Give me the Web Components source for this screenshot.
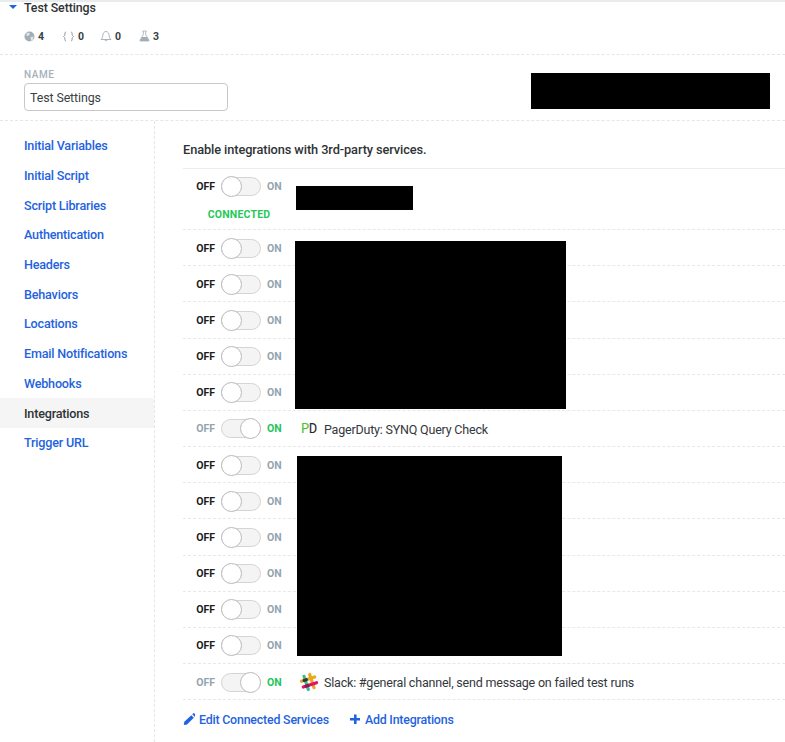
<!DOCTYPE html>
<html>
<head>
<meta charset="utf-8">
<style>
  html, body { margin: 0; padding: 0; background: #fff; }
  body { font-family: Roboto, "Open Sans", sans-serif; color: #33383c; width: 785px; height: 742px; overflow: hidden; }
</style>
</head>
<body>
<settings-header title="Test Settings"></settings-header>
<name-section value="Test Settings"></name-section>
<settings-body>
  <side-nav slot="nav">
    <nav-item>Initial Variables</nav-item>
    <nav-item>Initial Script</nav-item>
    <nav-item>Script Libraries</nav-item>
    <nav-item>Authentication</nav-item>
    <nav-item>Headers</nav-item>
    <nav-item>Behaviors</nav-item>
    <nav-item>Locations</nav-item>
    <nav-item>Email Notifications</nav-item>
    <nav-item>Webhooks</nav-item>
    <nav-item active>Integrations</nav-item>
    <nav-item>Trigger URL</nav-item>
  </side-nav>
  <integration-list heading="Enable integrations with 3rd-party services.">
    <integration-row status="CONNECTED" tall>
      <redact-block style="--x:113px;--y:17px;--w:117px;--h:24px"></redact-block>
    </integration-row>
    <integration-row><redact-block style="--x:112px;--y:11px;--w:271px;--h:168px"></redact-block></integration-row>
    <integration-row></integration-row>
    <integration-row></integration-row>
    <integration-row></integration-row>
    <integration-row></integration-row>
    <integration-row on>
      <pd-logo slot="icon"></pd-logo>
      PagerDuty: SYNQ Query Check
    </integration-row>
    <integration-row><redact-block style="--x:114px;--y:9px;--w:265px;--h:200px"></redact-block></integration-row>
    <integration-row></integration-row>
    <integration-row></integration-row>
    <integration-row></integration-row>
    <integration-row></integration-row>
    <integration-row></integration-row>
    <integration-row on>
      <slack-logo slot="icon"></slack-logo>
      Slack: #general channel, send message on failed test runs
    </integration-row>
    <div slot="actions" style="display:flex;gap:20px">
      <action-link icon="pencil">Edit Connected Services</action-link>
      <action-link icon="plus">Add Integrations</action-link>
    </div>
  </integration-list>
</settings-body>

<script>
const BLUE = '#1f63e0';

class SettingsHeader extends HTMLElement {
  connectedCallback() {
    this.attachShadow({ mode: 'open' });
    this.shadowRoot.innerHTML = `
      <style>
        :host { display: block; height: 54px; border-bottom: 1px dashed #e6e6e6; position: relative; }
        .shade { height: 2px; background: #e9ecef; }
        .title { display: flex; align-items: center; height: 10px; padding-left: 9px; gap: 7px; font-size: 12.4px; letter-spacing: -.1px; font-weight: 500; color: #2f3336; }
        .caret { width: 0; height: 0; border-left: 4px solid transparent; border-right: 4px solid transparent; border-top: 4px solid ${BLUE}; }
        .stats { display: flex; padding: 18px 0 0 24px; font-size: 10.5px; font-weight: 700; color: #3a3f44; }
        .stat { display: flex; align-items: center; gap: 3px; height: 12px; }
        .stat:nth-child(1) { width: 38px; }
        .stat:nth-child(2) { width: 38px; }
        .stat:nth-child(3) { width: 39px; }
      </style>
      <div class="shade"></div>
      <div class="title"><span class="caret"></span><span>${this.getAttribute('title')}</span></div>
      <div class="stats">
        <span class="stat">
          <svg width="11" height="11" viewBox="0 0 11 11"><circle cx="5.500" cy="5.500" r="5" fill="#a3adb5"/><path d="M2 3l2-1.500 2 1-1 2-2 .5zM6.500 6l3-.5-.5 3-2 1.500z" fill="#dfe3e6"/></svg>4
        </span>
        <span class="stat">
          <svg width="13" height="11" viewBox="0 0 13 11" fill="none" stroke="#8f9ba5" stroke-width="1"><path d="M4 1C2.500 1 3 3 2.800 4S1.500 5.500 1.500 5.500 2.600 6 2.800 7 2.500 10 4 10M9 1c1.500 0 1 2 1.200 3s1.300 1.500 1.300 1.500-1.100.5-1.300 1.500.3 3-1.200 3"/></svg>0
        </span>
        <span class="stat">
          <svg width="12" height="12" viewBox="0 0 12 12" fill="none" stroke="#a3adb5" stroke-width=".9"><path d="M1 9.500c1.200-1 1.600-2 1.800-4C3 3.300 4.200 1.500 6 1.500s3 1.800 3.200 4c.2 2 .6 3 1.800 4zM4.800 9.800c.2 1.300 2.200 1.300 2.400 0"/></svg>0
        </span>
        <span class="stat">
          <svg width="11" height="12" viewBox="0 0 11 12"><path d="M3.800 1h3.400v.8h-.5v3l3.300 5.200c.3.600 0 1-.6 1H1.600c-.6 0-.9-.4-.6-1l3.300-5.200v-3h-.5z" fill="none" stroke="#a3adb5" stroke-width=".8"/><path d="M3 7h5l2 3.500-.5.5h-8l-.5-.5z" fill="#a3adb5"/></svg>3
        </span>
      </div>`;
  }
}

class NameSection extends HTMLElement {
  connectedCallback() {
    this.attachShadow({ mode: 'open' });
    this.shadowRoot.innerHTML = `
      <style>
        :host { display: block; height: 65px; border-bottom: 1px dashed #e6e6e6; padding-left: 24px; position: relative; }
        label { display: block; padding-top: 13px; height: 15px; line-height: 13px; font-size: 10px; font-weight: 500; letter-spacing: .6px; color: #a6b1ba; }
        .field { width: 204px; height: 28px; box-sizing: border-box; border: 1px solid #c6c8ca; border-radius: 4px; padding-left: 5px; display: flex; align-items: center; font-size: 12.4px; letter-spacing: -.1px; color: #3a3f44; }
      </style>
      <label>NAME</label>
      <div class="field">${this.getAttribute('value')}</div>
      <redact-block style="--x:531px;--y:18px;--w:239px;--h:36px"></redact-block>`;
  }
}

class SettingsBody extends HTMLElement {
  connectedCallback() {
    this.attachShadow({ mode: 'open' });
    this.shadowRoot.innerHTML = `
      <style>
        :host { display: grid; grid-template-columns: 155px 1fr; height: 621px; }
        .nav { border-right: 1px dashed #e6e6e6; }
      </style>
      <div class="nav"><slot name="nav"></slot></div>
      <div><slot></slot></div>`;
  }
}

class SideNav extends HTMLElement {
  connectedCallback() {
    this.attachShadow({ mode: 'open' });
    this.shadowRoot.innerHTML = `
      <style>:host { display: block; padding-top: 10px; }</style>
      <slot></slot>`;
  }
}

class NavItem extends HTMLElement {
  connectedCallback() {
    this.attachShadow({ mode: 'open' });
    this.shadowRoot.innerHTML = `
      <style>
        :host { display: flex; align-items: center; height: 29.7px; padding-left: 24px; font-size: 12.6px; letter-spacing: -.2px; font-weight: 500; color: ${BLUE}; }
        :host([active]) { background: #f5f5f5; color: #2f3336; }
      </style>
      <slot></slot>`;
  }
}

class IntegrationList extends HTMLElement {
  connectedCallback() {
    this.attachShadow({ mode: 'open' });
    this.shadowRoot.innerHTML = `
      <style>
        :host { display: block; padding: 19px 0 0 28px; }
        h2 { margin: 0; height: 20px; line-height: 20px; padding-bottom: 8px; border-bottom: 1px solid #ececec; font-size: 12.8px; letter-spacing: -.1px; font-weight: 500; color: #2f3336; }
        .actions { padding-top: 10px; }
      </style>
      <h2>${this.getAttribute('heading')}</h2>
      <slot></slot>
      <div class="actions"><slot name="actions"></slot></div>`;
  }
}

class IntegrationRow extends HTMLElement {
  connectedCallback() {
    this.attachShadow({ mode: 'open' });
    const on = this.hasAttribute('on');
    const status = this.getAttribute('status');
    this.shadowRoot.innerHTML = `
      <style>
        :host { display: block; position: relative; height: 36.18px; border-bottom: 1px dashed #e8e8e8; box-sizing: border-box; font-size: 12.5px; letter-spacing: -.2px; color: #33383c; }
        :host([tall]) { height: 61px; }
        .line { display: flex; align-items: center; height: 36px; }
        :host([tall]) .line { height: 35px; }
        .off, .on { font-size: 10.5px; font-weight: 700; letter-spacing: 0; }
        .off { width: 32px; text-align: right; color: ${on ? '#93a4b0' : '#1c1c1c'}; }
        .on { padding-left: 6px; box-sizing: border-box; width: 29px; color: ${on ? '#1fc45a' : '#93a4b0'}; }
        toggle-switch { margin-left: 6px; }
        .icon { width: 25px; margin-left: 9px; display: flex; align-items: center; }
        .label { padding-top: 1px; }
        .status { width: 112px; text-align: center; margin-top: 4px; font-size: 10.5px; font-weight: 700; letter-spacing: .2px; color: #1fc95a; }
      </style>
      <div class="line">
        <span class="off">OFF</span>
        <toggle-switch ${on ? 'on' : ''}></toggle-switch>
        <span class="on">ON</span>
        <span class="icon"><slot name="icon"></slot></span>
        <span class="label"><slot></slot></span>
      </div>
      ${status ? `<div class="status">${status}</div>` : ''}`;
  }
}

class ToggleSwitch extends HTMLElement {
  connectedCallback() {
    this.attachShadow({ mode: 'open' });
    this.shadowRoot.innerHTML = `
      <style>
        :host { display: block; width: 40px; height: 19px; box-sizing: border-box; border: 1px solid #d4d4d4; border-radius: 10px; background: #f4f4f4; position: relative; }
        .knob { position: absolute; top: -2px; left: -1px; width: 21px; height: 21px; box-sizing: border-box; border: 1px solid #bcb9b4; border-radius: 50%; background: #fff; }
        :host([on]) .knob { left: 18px; }
      </style>
      <span class="knob"></span>`;
  }
}

class RedactBlock extends HTMLElement {
  connectedCallback() {
    this.attachShadow({ mode: 'open' });
    this.shadowRoot.innerHTML = `
      <style>
        :host { position: absolute; z-index: 1; left: var(--x); top: var(--y); width: var(--w); height: var(--h); background: #000; }
      </style>`;
  }
}

class PdLogo extends HTMLElement {
  connectedCallback() {
    this.attachShadow({ mode: 'open' });
    this.shadowRoot.innerHTML = `
      <style>
        :host { display: inline-block; margin-left: 2px; font-family: "Liberation Mono", monospace; font-size: 14px; line-height: 14px; letter-spacing: -.6px; white-space: nowrap; }
        .p { color: #4cc03a; }
        .d { color: #2b2b2b; }
      </style>
      <span class="p">P</span><span class="d">D</span>`;
  }
}

class SlackLogo extends HTMLElement {
  connectedCallback() {
    this.attachShadow({ mode: 'open' });
    this.shadowRoot.innerHTML = `
      <style>:host { display: block; height: 20px; }</style>
      <svg width="20" height="20" viewBox="0 0 20 20" fill="none" stroke-width="3.200" stroke-linecap="round">
        <g transform="rotate(-18 10 10)">
          <path d="M7 3v14" stroke="#3eb991"/>
          <path d="M13 3v14" stroke="#e9a820"/>
          <path d="M3 7h14" stroke="#e9a820"/>
          <path d="M3 13h14" stroke="#e01563"/>
          <path d="M5.800 7h2.400" stroke="#2d3a33"/>
          <path d="M5.800 13h2.400" stroke="#8c1d54"/>
        </g>
      </svg>`;
  }
}

class ActionLink extends HTMLElement {
  connectedCallback() {
    this.attachShadow({ mode: 'open' });
    const icons = {
      pencil: '<path d="M8.300 2.200l2.500 2.500L4 11.500 .8 12l.5-3.200zM9.200 1.300l.8-.8c.4-.4 1-.4 1.400 0l1.100 1.100c.4.400.4 1 0 1.400l-.8.800z" fill="currentColor"/>',
      plus: '<path d="M5 1.500h2.600V5H11v2.600H7.600V11H5V7.600H1V5h4z" fill="currentColor"/>'
    };
    this.shadowRoot.innerHTML = `
      <style>
        :host { display: inline-flex; align-items: center; gap: 4px; height: 18px; font-size: 12.4px; letter-spacing: -.2px; font-weight: 500; color: ${BLUE}; }
      </style>
      <svg width="12" height="13" viewBox="0 0 12 13">${icons[this.getAttribute('icon')]}</svg>
      <slot></slot>`;
  }
}

customElements.define('settings-header', SettingsHeader);
customElements.define('name-section', NameSection);
customElements.define('settings-body', SettingsBody);
customElements.define('side-nav', SideNav);
customElements.define('nav-item', NavItem);
customElements.define('integration-list', IntegrationList);
customElements.define('integration-row', IntegrationRow);
customElements.define('toggle-switch', ToggleSwitch);
customElements.define('redact-block', RedactBlock);
customElements.define('pd-logo', PdLogo);
customElements.define('slack-logo', SlackLogo);
customElements.define('action-link', ActionLink);
</script>
</body>
</html>
